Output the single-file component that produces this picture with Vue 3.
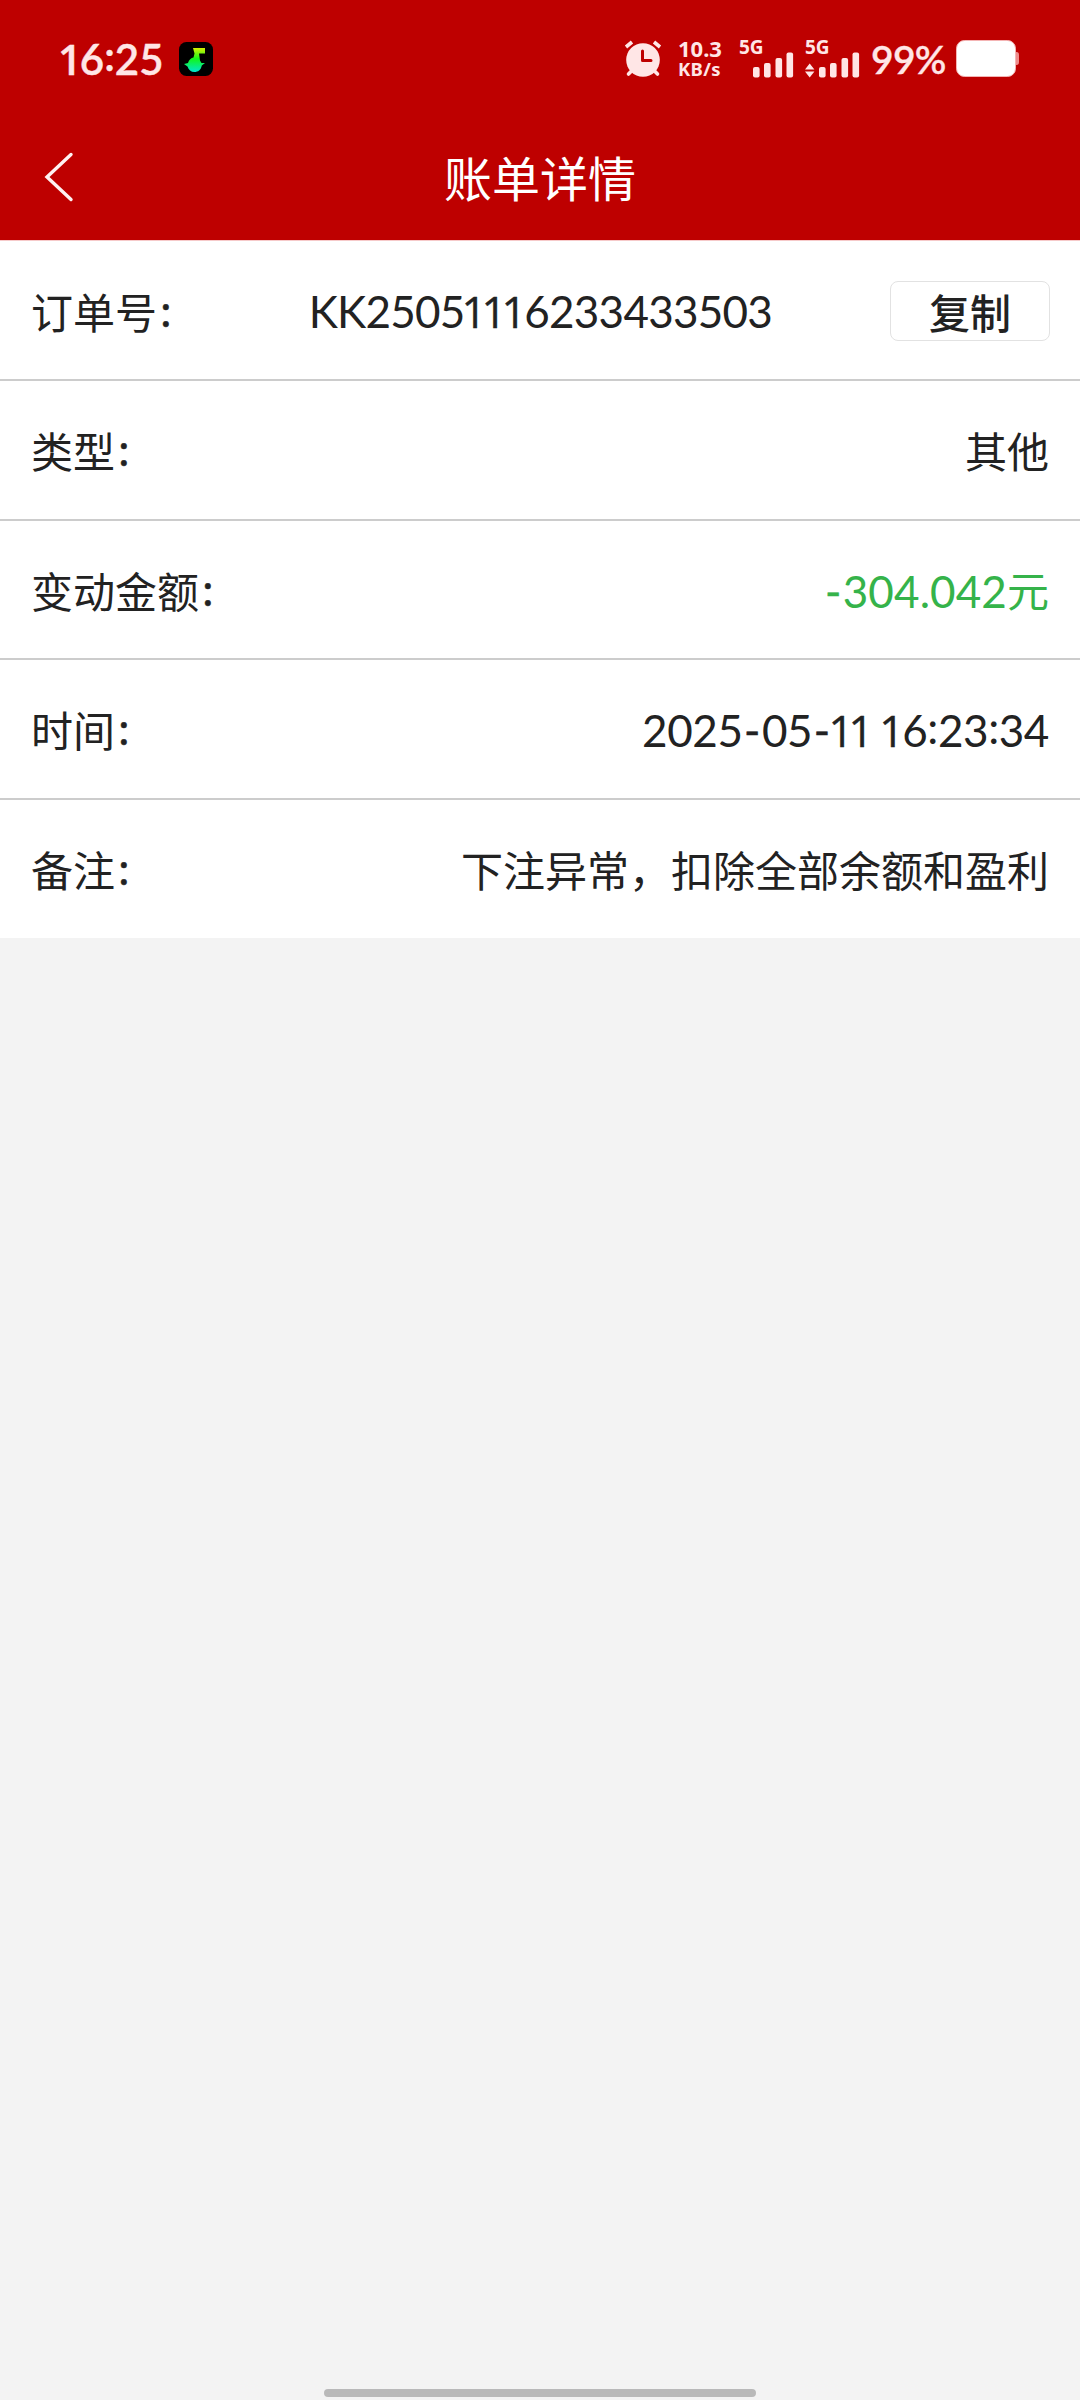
<script setup>
const glyphClass = { 1: 'one', ':': 'colon', '-': 'dash', '.': 'dot', ' ': 'gap' }
const split = (text) =>
  text.split(/([1:\-. ])/).filter(Boolean).map((t) => ({ t, c: glyphClass[t] || '' }))

const clock = split('16:25')
const orderNo = split('KK25051116233433503')
const amount = split('-304.042')
const time = split('2025-05-11 16:23:34')
</script>

<template>
  <div class="screen">
    <header class="top">
      <div class="status">
        <span class="clock num"><span v-for="(p, i) in clock" :key="i" :class="p.c">{{ p.t }}</span></span>
        <svg class="app" width="36" height="36" viewBox="0 0 36 36">
          <defs>
            <linearGradient id="note" x1="0" y1="0" x2="0" y2="1">
              <stop offset="0" stop-color="#d8f000" />
              <stop offset="0.45" stop-color="#12f51a" />
              <stop offset="1" stop-color="#00e6d0" />
            </linearGradient>
          </defs>
          <rect x="1" y="1" width="34" height="34" rx="7.5" fill="#000" />
          <path d="M15 7H27V12.5H21L22 19.500L23.500 22H27L23.800 24.5C23 29 20 31 16.5 31C13 31 10.500 29 9.500 25.500L6 23L10 22C11 18.500 13 17 15.500 16.500L16.500 12.500Z" fill="url(#note)" />
        </svg>
        <svg class="alarm" width="40" height="38" viewBox="0 0 40 38">
          <g stroke="#ffe6e6" stroke-linecap="round" fill="none">
            <path d="M3 7L9 2M31 2L37 7" stroke-width="3.600" stroke-linecap="butt" />
            <path d="M8.500 31L5.500 34M31.500 31L34.500 34" stroke-width="3.600" />
          </g>
          <circle cx="20" cy="20" r="16.800" fill="#ffe6e6" />
          <path d="M19.500 11V20.500H28" stroke="#be0000" stroke-width="3" stroke-linecap="round" stroke-linejoin="round" fill="none" />
        </svg>
        <div class="speed"><b>10.3</b><b class="unit">KB/s</b></div>
        <div class="signal first">
          <span>5G</span>
          <svg width="56" height="26" viewBox="0 0 56 26" fill="#ffe6e6">
            <rect x="14" y="15" width="6.600" height="10.500" rx="2" />
            <rect x="25" y="11" width="6.600" height="14.500" rx="2" />
            <rect x="36.500" y="6" width="6.600" height="19.500" rx="2" />
            <rect x="47.500" y="0.500" width="6.600" height="25" rx="2" />
          </svg>
        </div>
        <div class="signal second">
          <span>5G</span>
          <svg width="56" height="26" viewBox="0 0 56 26" fill="#ffe6e6">
            <path d="M0 17.500L4.700 11.500L9.400 17.500ZM0 19.500H9.400L4.700 25.500Z" />
            <rect x="14" y="15" width="6.600" height="10.500" rx="2" />
            <rect x="25" y="11" width="6.600" height="14.500" rx="2" />
            <rect x="36.500" y="6" width="6.600" height="19.500" rx="2" />
            <rect x="47.500" y="0.500" width="6.600" height="25" rx="2" />
          </svg>
        </div>
        <span class="percent">99%</span>
        <svg class="battery" width="64" height="38" viewBox="0 0 64 38">
          <path d="M59 12H60.500Q63 12 63 15V22Q63 25 60.500 25H59Z" fill="#ef8c8c" />
          <rect x="0.500" y="0.500" width="59" height="36" rx="8" fill="#fff" stroke="#f4b4b4" stroke-width="1" />
        </svg>
      </div>
      <div class="nav">
        <svg class="back" width="36" height="56" viewBox="0 0 36 56">
          <path d="M28 4.500L4 27L28 49.500" fill="none" stroke="#fff2f2" stroke-width="3.400" stroke-linecap="round" stroke-linejoin="miter" />
        </svg>
        <h1>账单详情</h1>
      </div>
    </header>

    <main>
      <section class="row">
        <span class="label">订单号<span class="mark">:</span></span>
        <span class="order num"><span v-for="(p, i) in orderNo" :key="i" :class="p.c">{{ p.t }}</span></span>
        <button type="button">复制</button>
      </section>
      <section class="row">
        <span class="label">类型<span class="mark">:</span></span>
        <span>其他</span>
      </section>
      <section class="row">
        <span class="label">变动金额<span class="mark">:</span></span>
        <span class="green"><span class="num amount"><span v-for="(p, i) in amount" :key="i" :class="p.c">{{ p.t }}</span></span>元</span>
      </section>
      <section class="row">
        <span class="label">时间<span class="mark">:</span></span>
        <span class="num time"><span v-for="(p, i) in time" :key="i" :class="p.c">{{ p.t }}</span></span>
      </section>
      <section class="row last">
        <span class="label">备注<span class="mark">:</span></span>
        <span>下注异常，扣除全部余额和盈利</span>
      </section>
    </main>
    <footer><i></i></footer>
  </div>
</template>

<style>
body { background: #f3f3f3; }
</style>

<style scoped>
.screen {
  width: 1080px;
  height: 2400px;
  display: flex;
  flex-direction: column;
  background: #f3f3f3;
  color: #222;
  font-family: "Noto Sans CJK SC", sans-serif;
  font-size: 42px;
  overflow: hidden;
}
.top {
  height: 240px;
  flex: none;
  background: #be0000;
  border-bottom: 1px solid #f6caca;
}
.status {
  height: 118px;
  display: flex;
  align-items: center;
  color: #ffe6e6;
  padding-left: 59px;
}
.num { font-family: Lato, sans-serif; white-space: pre; font-kerning: none; }
.one {
  font-family: "Open Sans", sans-serif;
  font-size: 0.99em;
  line-height: 1px;
  margin-left: -3px;
  letter-spacing: -2px;
  -webkit-text-stroke: 0.400px currentColor;
}
.colon { position: relative; top: -0.090em; }
.dash { margin-left: 1.500px; letter-spacing: 1.500px; -webkit-text-stroke: 0.500px currentColor; }
.clock {
  width: 119px;
  font-size: 42px;
  font-weight: 600;
  -webkit-text-stroke: 0.400px currentColor;
}
.clock .one { margin-left: -1px; letter-spacing: -2px; }
.app { flex: none; }
.alarm { margin-left: 409px; flex: none; }
.speed {
  width: 60px;
  margin: -2px 0 0 15px;
  display: flex;
  flex-direction: column;
  font: 700 22px/22px "Noto Sans", sans-serif;
}
.speed b { font-weight: 700; }
.speed .unit { font-size: 18.500px; line-height: 20px; letter-spacing: 0.300px; }
.signal {
  width: 56px;
  height: 38px;
  display: flex;
  flex-direction: column;
  justify-content: space-between;
  font: 700 19px/15px "Noto Sans", sans-serif;
}
.signal span { height: 12px; }
.signal svg { flex: none; }
.first { margin-left: 1px; }
.second { margin-left: 10px; }
.percent {
  width: 84px;
  margin-left: 10px;
  margin-top: -1px;
  font: 600 39px Lato, sans-serif;
  letter-spacing: -0.700px;
  -webkit-text-stroke: 0.300px currentColor;
}
.battery { flex: none; margin-left: 1px; }
.nav {
  height: 122px;
  display: flex;
  align-items: center;
  padding: 0 42px;
}
.back { margin: -3px 0 0 1px; }
h1 {
  flex: 1;
  margin: -6px 37px 0 0;
  text-align: center;
  color: #fff;
  font-size: 48px;
  line-height: 60px;
  font-weight: 400;
}
.row {
  height: 139.600px;
  box-sizing: border-box;
  display: flex;
  align-items: center;
  justify-content: space-between;
  padding: 1px 31px 0;
  background: #fff;
  border-bottom: 2px solid #ccc;
  line-height: 60px;
}
.row:first-child { height: 140px; }
.row.last { height: 138.200px; padding-top: 0; border: 0; }
.mark {
  position: relative;
  top: -3px;
  margin-left: 3px;
  padding-right: 4px;
  -webkit-text-stroke: 0.500px currentColor;
}
.order { font-size: 44px; letter-spacing: -0.750px; margin: 1px 0 0 15px; }
.amount, .time { font-size: 44px; }
.amount { position: relative; top: 1px; letter-spacing: 0.100px; }
.time { letter-spacing: -0.400px; padding-top: 2px; }
.green { color: #35b34a; }
button {
  width: 160px;
  height: 60px;
  box-sizing: border-box;
  padding: 0;
  margin: 0 -1px 0 0;
  background: #fff;
  border: 1px solid #e2e2e2;
  border-radius: 8px;
  color: #222;
  font: 500 41px/56px "Noto Sans CJK SC", sans-serif;
}
footer {
  margin-top: auto;
  height: 11px;
  display: flex;
  justify-content: center;
  align-items: flex-start;
}
footer i { width: 432px; height: 8px; border-radius: 4px; background: #b9b9b9; }
</style>
